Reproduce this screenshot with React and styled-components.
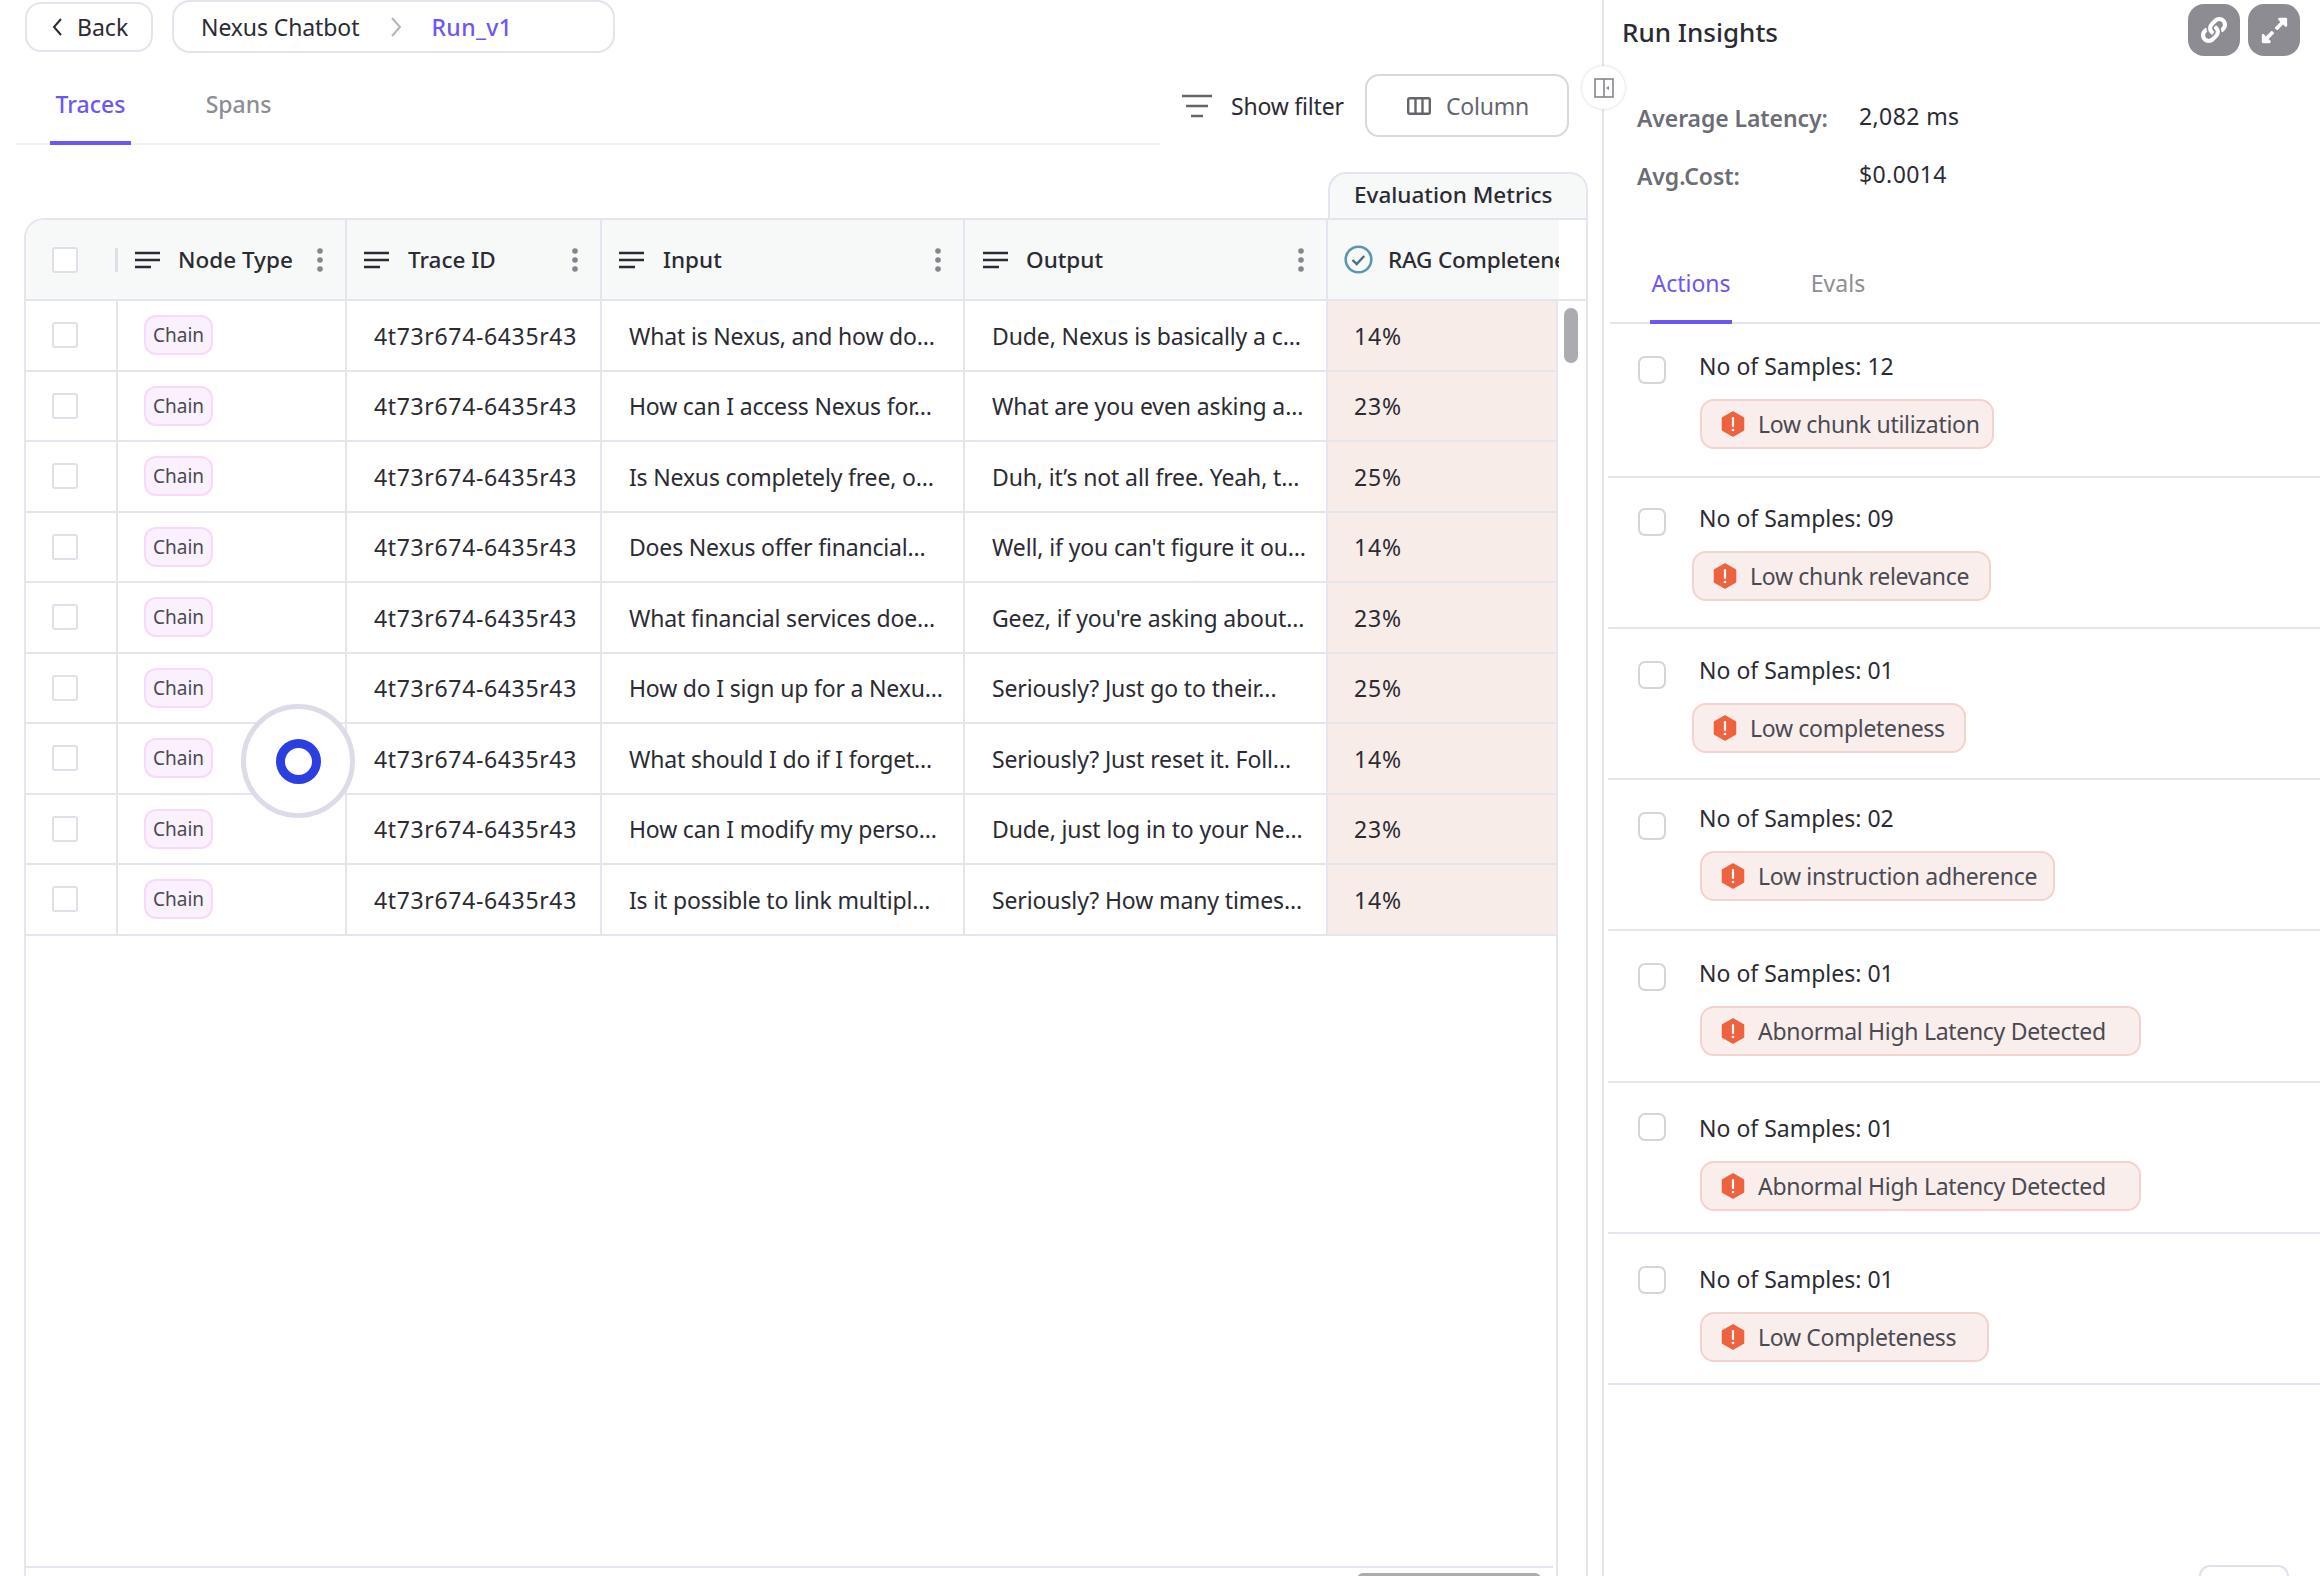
import styled, { createGlobalStyle } from "styled-components";
import { FaLink, FaExpandAlt } from "react-icons/fa";

const traces = [
  ["What is Nexus, and how do...", "Dude, Nexus is basically a c...", "14%"],
  ["How can I access Nexus for...", "What are you even asking a...", "23%"],
  ["Is Nexus completely free, o...", "Duh, it’s not all free. Yeah, t...", "25%"],
  ["Does Nexus offer financial...", "Well, if you can't figure it ou...", "14%"],
  ["What financial services doe...", "Geez, if you're asking about...", "23%"],
  ["How do I sign up for a Nexu...", "Seriously? Just go to their...", "25%"],
  ["What should I do if I forget...", "Seriously? Just reset it. Foll...", "14%"],
  ["How can I modify my perso...", "Dude, just log in to your Ne...", "23%"],
  ["Is it possible to link multipl...", "Seriously? How many times...", "14%"],
];

const actions = [
  { samples: "12", label: "Low chunk utilization", top: 24.5, box: 5, inset: 1, width: 294 },
  { samples: "09", label: "Low chunk relevance", top: 25.5, box: 5, inset: -7, width: 299 },
  { samples: "01", label: "Low completeness", top: 25.5, box: 6, inset: -7, width: 274 },
  { samples: "02", label: "Low instruction adherence", top: 22.5, box: 9, inset: 1, width: 355 },
  { samples: "01", label: "Abnormal High Latency Detected", top: 26.5, box: 5, inset: 1, width: 441 },
  { samples: "01", label: "Abnormal High Latency Detected", top: 30.5, box: 0, inset: 1, width: 441 },
  { samples: "01", label: "Low Completeness", top: 30.5, box: 2, inset: 1, width: 289 },
];

const columns = [
  { title: "Node Type", width: 229, pad: 17, gap: 18 },
  { title: "Trace ID", width: 255, pad: 17, gap: 19 },
  { title: "Input", width: 363, pad: 17, gap: 19 },
  { title: "Output", width: 363, pad: 18, gap: 18 },
];

const LinesIcon = () => (
  <svg width="25" height="20" viewBox="0 0 25 20" fill="none" stroke="#2b2b33" strokeWidth="2.6">
    <path d="M0 3h25M0 10h25M0 17h16" />
  </svg>
);

const DotsIcon = () => (
  <svg width="6" height="24" viewBox="0 0 6 24" fill="#85858c">
    <circle cx="3" cy="3" r="2.8" />
    <circle cx="3" cy="12" r="2.8" />
    <circle cx="3" cy="21" r="2.8" />
  </svg>
);

const AlertIcon = () => (
  <svg width="24" height="26" viewBox="0 0 24 26">
    <path d="M12 1l10.5 6v12L12 25 1.500 19V7z" fill="#ee6240" stroke="#ee6240" strokeWidth="1.500" strokeLinejoin="round" />
    <path d="M12 7v8" stroke="#fff" strokeWidth="2.200" strokeLinecap="round" />
    <circle cx="12" cy="19" r="1.300" fill="#fff" />
  </svg>
);

const App = () => {
  return (
    <Page>
      <GlobalStyle />
      <Main>
        <TopBar>
          <BackButton>
            <svg width="12" height="20" viewBox="0 0 12 20" fill="none" stroke="#2b2b33" strokeWidth="2">
              <path d="M10 2L3 10l7 8" />
            </svg>
            Back
          </BackButton>
          <Breadcrumb>
            Nexus Chatbot
            <svg width="12" height="22" viewBox="0 0 12 22" fill="none" stroke="#b4b4ba" strokeWidth="2">
              <path d="M2 2l8 9-8 9" />
            </svg>
            <CurrentRun>Run_v1</CurrentRun>
          </Breadcrumb>
        </TopBar>

        <TabRow>
          <TabBar>
            <Tab $active>Traces</Tab>
            <Tab>Spans</Tab>
          </TabBar>
          <FilterButton>
            <svg width="30" height="24" viewBox="0 0 30 24" fill="none" stroke="#65656d" strokeWidth="2.600">
              <path d="M0 2h30M4 12h22M9 22h12" />
            </svg>
            Show filter
          </FilterButton>
          <ColumnButton>
            <svg width="24" height="18" viewBox="0 0 24 18" fill="none" stroke="#65656d" strokeWidth="2.400">
              <rect x="1.200" y="1.200" width="21.600" height="15.600" rx="1.500" />
              <path d="M8.500 1v16M15.500 1v16" />
            </svg>
            Column
          </ColumnButton>
        </TabRow>

        <MetricsTab>Evaluation Metrics</MetricsTab>

        <TableFrame>
          <HeaderRow>
            <CheckHeadCell>
              <Checkbox />
              <HeadDivider />
            </CheckHeadCell>
            {columns.map((col) => (
              <HeadCell key={col.title} $width={col.width} $pad={col.pad} $gap={col.gap}>
                <LinesIcon />
                <HeadTitle>{col.title}</HeadTitle>
                <DotsIcon />
              </HeadCell>
            ))}
            <MetricHeadCell>
              <svg width="29" height="29" viewBox="0 0 29 29" fill="none">
                <circle cx="14.500" cy="14.500" r="12.800" stroke="#5a98ad" strokeWidth="2.600" />
                <path d="M8.500 15l4.200 4 7.500-8" stroke="#46707f" strokeWidth="2.400" />
              </svg>
              RAG Completeness
            </MetricHeadCell>
          </HeaderRow>

          <TableBody>
            <RowsArea>
              <Rows>
                {traces.map(([input, output, score], i) => (
                  <Row key={i}>
                    <CheckCell>
                      <Checkbox />
                    </CheckCell>
                    <NodeCell>
                      <NodeChip>Chain</NodeChip>
                    </NodeCell>
                    <Cell $width={255} $pad={27} $spacing={0.65}>4t73r674-6435r43</Cell>
                    <Cell $width={363} $pad={27} $spacing={-0.18}>{input}</Cell>
                    <Cell $width={363} $pad={27} $spacing={-0.12}>{output}</Cell>
                    <ScoreCell>{score}</ScoreCell>
                  </Row>
                ))}
              </Rows>
              <HorizontalTrack>
                <HorizontalThumb />
              </HorizontalTrack>
            </RowsArea>
            <VerticalTrack>
              <VerticalThumb />
            </VerticalTrack>
          </TableBody>
        </TableFrame>
      </Main>

      <CollapseHandle>
        <svg width="20" height="20" viewBox="0 0 20 20" fill="none" stroke="#85858c" strokeWidth="1.600">
          <rect x="1" y="1" width="18" height="18" />
          <path d="M10 1v18" />
          <path d="M15 8l-3 2 3 2z" fill="#85858c" stroke="none" />
        </svg>
      </CollapseHandle>

      <Insights>
        <InsightsHeader>
          <InsightsTitle>Run Insights</InsightsTitle>
          <IconButton>
            <FaLink size={26} />
          </IconButton>
          <IconButton>
            <FaExpandAlt size={29} />
          </IconButton>
        </InsightsHeader>

        <Stat>
          <StatLabel>Average Latency:</StatLabel>
          <StatValue>2,082 ms</StatValue>
        </Stat>
        <Stat>
          <StatLabel>Avg.Cost:</StatLabel>
          <StatValue>$0.0014</StatValue>
        </Stat>

        <InsightTabs>
          <InsightTab $active>Actions</InsightTab>
          <InsightTab>Evals</InsightTab>
        </InsightTabs>

        {actions.map((action, i) => (
          <ActionRow key={i} $top={action.top}>
            <ActionCheck $top={action.box}>
              <Checkbox $round />
            </ActionCheck>
            <div>
              <SampleCount>No of Samples: {action.samples}</SampleCount>
              <AlertChip $inset={action.inset} $width={action.width}>
                <AlertIcon />
                {action.label}
              </AlertChip>
            </div>
          </ActionRow>
        ))}
        <PagerStub />
      </Insights>

      <TouchPointer>
        <TouchDot />
      </TouchPointer>
    </Page>
  );
};

export default App;

const GlobalStyle = createGlobalStyle`
  html, body {
    margin: 0;
    background: #fff;
  }
  * {
    box-sizing: border-box;
  }
`;

const Page = styled.div`
  position: relative;
  display: flex;
  width: 2320px;
  height: 1576px;
  overflow: hidden;
  color: #2b2b33;
  font-family: "Noto Sans", "Liberation Sans", sans-serif;
  font-size: 23px;

  svg {
    flex: none;
  }
`;

const Main = styled.div`
  width: 1604px;
  flex: none;
  display: flex;
  flex-direction: column;
  border-right: 2px solid #e5e5ef;
`;

const TopBar = styled.div`
  display: flex;
  gap: 19px;
  height: 53px;
  margin-left: 25px;
`;

const BackButton = styled.div`
  width: 128px;
  height: 50px;
  margin-top: 2px;
  padding-left: 24px;
  display: flex;
  align-items: center;
  gap: 14px;
  border: 2px solid #e4e4ec;
  border-radius: 16px;
`;

const Breadcrumb = styled.div`
  width: 443px;
  height: 53px;
  padding-left: 27px;
  display: flex;
  align-items: center;
  gap: 31px;
  letter-spacing: -0.1px;
  border: 2px solid #e4e4ec;
  border-radius: 18px;
`;

const CurrentRun = styled.span`
  margin-left: -2px;
  letter-spacing: 0.4px;
  color: #6c57f5;
  font-weight: 500;
`;

const TabRow = styled.div`
  height: 92px;
  margin-left: 16px;
  display: flex;
  align-items: flex-start;
`;

const TabBar = styled.div`
  width: 1144px;
  height: 92px;
  padding-left: 34px;
  display: flex;
  gap: 67px;
  border-bottom: 2px solid #f0f0f6;
`;

const Tab = styled.div`
  height: 92px;
  width: 81px;
  padding-top: 33px;
  line-height: 36px;
  text-align: center;
  font-weight: 500;
  color: ${(p) => (p.$active ? "#6c57f5" : "#8d8d95")};
  border-bottom: ${(p) => (p.$active ? "4px solid #6c57f5" : "none")};
`;

const FilterButton = styled.div`
  width: 183px;
  margin-top: 35px;
  margin-left: 22px;
  height: 36px;
  display: flex;
  align-items: center;
  gap: 19px;
  letter-spacing: -0.2px;
  white-space: nowrap;
`;

const ColumnButton = styled.div`
  width: 204px;
  height: 63px;
  margin-top: 21px;
  padding-left: 40px;
  display: flex;
  align-items: center;
  gap: 15px;
  letter-spacing: -0.2px;
  color: #65656d;
  border: 2px solid #d8d8e0;
  border-radius: 14px;
`;

const MetricsTab = styled.div`
  width: 260px;
  height: 46px;
  margin: 27px 0 0 1328px;
  padding-left: 24px;
  line-height: 42px;
  font-weight: 500;
  font-size: 22.500px;
  background: #f7f8f8;
  border: 2px solid #e5e5ef;
  border-bottom: none;
  border-radius: 18px 18px 0 0;
`;

const TableFrame = styled.div`
  width: 1564px;
  height: 1358px;
  margin-left: 24px;
  display: flex;
  flex-direction: column;
  border: 2px solid #e5e5ef;
  border-bottom: none;
  border-top-left-radius: 20px;
`;

const HeaderRow = styled.div`
  height: 81px;
  width: 1561px;
  flex: none;
  display: flex;
  border-bottom: 2px solid #e5e5ef;
`;

const CheckHeadCell = styled.div`
  width: 92px;
  padding-left: 26px;
  display: flex;
  align-items: center;
  justify-content: space-between;
  background: #f7f8f8;
  border-top-left-radius: 18px;
`;

const HeadDivider = styled.span`
  width: 3px;
  height: 24px;
  background: #dedee8;
`;

const HeadCell = styled.div`
  width: ${(p) => p.$width}px;
  flex: none;
  padding: 0 22px 0 ${(p) => p.$pad}px;
  display: flex;
  align-items: center;
  gap: ${(p) => p.$gap}px;
  font-weight: 500;
  font-size: 22.500px;
  background: #f7f8f8;
  border-right: 2px solid #e5e5ef;
`;

const HeadTitle = styled.span`
  flex: 1;
`;

const MetricHeadCell = styled.div`
  width: 231px;
  flex: none;
  padding-left: 16px;
  display: flex;
  align-items: center;
  gap: 15px;
  white-space: nowrap;
  overflow: hidden;
  letter-spacing: -0.2px;
  font-weight: 500;
  font-size: 22.500px;
  background: #f7f8f8;
`;

const TableBody = styled.div`
  flex: 1;
  min-height: 0;
  display: flex;
`;

const RowsArea = styled.div`
  width: 1532px;
  flex: none;
  display: flex;
  flex-direction: column;
  border-right: 2px solid #e5e5ef;
`;

const Rows = styled.div`
  flex: 1;
`;

const Row = styled.div`
  height: 70.500px;
  display: flex;
  border-bottom: 2px solid #e5e5ef;
`;

const CheckCell = styled.div`
  width: 92px;
  padding-left: 26px;
  display: flex;
  align-items: center;
  border-right: 2px solid #e5e5ef;
`;

const NodeCell = styled.div`
  width: 229px;
  flex: none;
  padding: 14px 0 0 26px;
  border-right: 2px solid #e5e5ef;
`;

const NodeChip = styled.span`
  display: block;
  width: 69px;
  height: 40px;
  line-height: 37px;
  text-align: center;
  font-size: 19px;
  color: #4a4a52;
  background: #fbf0fe;
  border: 2px solid #f7d9f8;
  border-radius: 12px;
`;

const Cell = styled.div`
  width: ${(p) => p.$width}px;
  flex: none;
  padding: 1px 0 0 ${(p) => p.$pad}px;
  display: flex;
  align-items: center;
  white-space: nowrap;
  overflow: hidden;
  letter-spacing: ${(p) => p.$spacing}px;
  border-right: 2px solid #e5e5ef;
`;

const ScoreCell = styled.div`
  flex: 1;
  padding: 1px 0 0 26px;
  display: flex;
  align-items: center;
  letter-spacing: 0.8px;
  background: #f8ece8;
`;

const HorizontalTrack = styled.div`
  height: 10px;
  flex: none;
  width: 1527px;
  border-top: 2px solid #e5e5ef;
`;

const HorizontalThumb = styled.div`
  width: 184px;
  height: 8px;
  margin: 5px 0 0 1331px;
  background: #acacac;
  border-radius: 6px 6px 0 0;
`;

const VerticalTrack = styled.div`
  flex: 1;
  padding: 7px 0 0 6px;
`;

const VerticalThumb = styled.div`
  width: 14px;
  height: 55px;
  background: #acacb0;
  border-radius: 7px;
`;

const Checkbox = styled.span`
  display: block;
  width: ${(p) => (p.$round ? 28 : 26)}px;
  height: ${(p) => (p.$round ? 28 : 26)}px;
  background: #fff;
  border: 2px solid ${(p) => (p.$round ? "#d5d5dc" : "#e0e0ea")};
  border-radius: ${(p) => (p.$round ? 7 : 3)}px;
`;

const CollapseHandle = styled.div`
  position: absolute;
  left: 1582px;
  top: 66px;
  width: 43px;
  height: 43px;
  display: flex;
  align-items: center;
  justify-content: center;
  background: #fff;
  border-radius: 50%;
  box-shadow: 0 0 3px rgba(120, 120, 150, 0.35);
`;

const Insights = styled.div`
  flex: 1;
  min-width: 0;
  display: flex;
  flex-direction: column;
  padding-left: 2px;
`;

const InsightsHeader = styled.div`
  height: 78px;
  flex: none;
  padding: 4px 20px 0 16px;
  display: flex;
  gap: 8px;
`;

const InsightsTitle = styled.div`
  flex: 1;
  font-size: 26px;
  line-height: 56px;
  font-weight: 500;
`;

const IconButton = styled.div`
  width: 52px;
  height: 52px;
  display: flex;
  align-items: center;
  justify-content: center;
  color: #fff;
  background: #8c8c92;
  border-radius: 16px;
`;

const Stat = styled.div`
  height: 62px;
  padding: 22px 0 0 31px;
  display: flex;
  line-height: 36px;
`;

const StatLabel = styled.div`
  width: 222px;
  flex: none;
  font-weight: 600;
  letter-spacing: -0.1px;
  color: #6d6d76;
`;

const StatValue = styled.div`
  margin-top: -2px;
  letter-spacing: 0.4px;
`;

const InsightTabs = styled.div`
  margin: 66px 0 3px 4px;
  padding-left: 40px;
  height: 63px;
  flex: none;
  display: flex;
  gap: 65px;
  border-bottom: 2px solid #e5e5ef;
`;

const InsightTab = styled.div`
  height: 63px;
  width: 82px;
  padding-top: 4px;
  line-height: 36px;
  text-align: center;
  color: ${(p) => (p.$active ? "#6c57f5" : "#8d8d95")};
  border-bottom: ${(p) => (p.$active ? "4px solid #6c57f5" : "none")};
`;

const ActionRow = styled.div`
  height: 151.200px;
  flex: none;
  margin-left: 2px;
  padding: ${(p) => p.$top}px 0 0 30px;
  display: flex;
  border-bottom: 2px solid #e5e5ef;
`;

const ActionCheck = styled.div`
  width: 61px;
  flex: none;
  padding-top: ${(p) => p.$top}px;
`;

const SampleCount = styled.div`
  line-height: 30px;
`;

const AlertChip = styled.div`
  width: ${(p) => p.$width}px;
  height: 50px;
  margin: 18px 0 0 ${(p) => p.$inset}px;
  padding-left: 19px;
  display: flex;
  align-items: center;
  gap: 13px;
  letter-spacing: -0.3px;
  color: #4a4a52;
  white-space: nowrap;
  background: #f9eeec;
  border: 2px solid #f3d3ce;
  border-radius: 14px;
`;

const PagerStub = styled.div`
  width: 90px;
  height: 12px;
  margin: 180px 0 0 593px;
  border: 2px solid #e0e0ea;
  border-bottom: none;
  border-radius: 12px 12px 0 0;
`;

const TouchPointer = styled.div`
  position: absolute;
  left: 241px;
  top: 704px;
  width: 114px;
  height: 114px;
  display: flex;
  align-items: center;
  justify-content: center;
  background: #fff;
  border: 5px solid #dcdce8;
  border-radius: 50%;
`;

const TouchDot = styled.div`
  width: 45px;
  height: 45px;
  background: #fff;
  border: 9px solid #2b3fe0;
  border-radius: 50%;
`;
